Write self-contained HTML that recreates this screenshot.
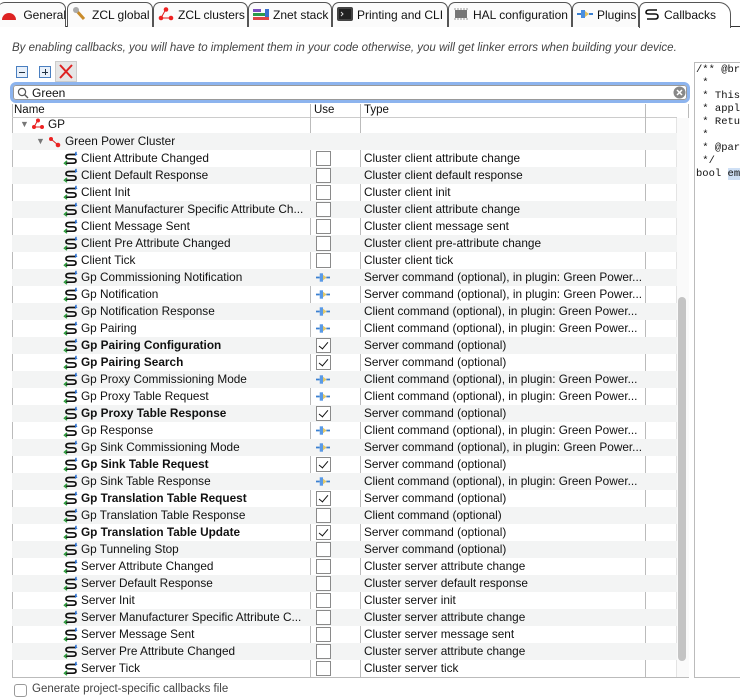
<!DOCTYPE html>
<html><head><meta charset="utf-8"><style>
*{box-sizing:border-box;margin:0;padding:0}
body{width:740px;height:697px;background:#fff;font-family:"Liberation Sans",sans-serif;font-size:11.8px;color:#111;position:relative;overflow:hidden}
.abs{position:absolute}
.tabs{position:absolute;left:0;top:0;width:740px;height:27px;background:#fff;border-bottom:1px solid #333}
.tab{position:absolute;top:2px;height:25px;border:1px solid #555;border-bottom:none;border-radius:7px 7px 0 0;background:#fbfbfb;font-size:12px;line-height:24px;padding-left:4px;white-space:nowrap}
.tab.act{background:#fff;height:26px}
.ic{display:inline-block;width:16px;height:14px;vertical-align:-2px;margin-right:4px}
.row{position:absolute;left:12px;width:665px;height:17px;line-height:17px;white-space:nowrap}
.row.s{background:#f3f4f4}
.nm{position:absolute;left:69px}
.ty{position:absolute;left:352px;width:280px;overflow:hidden}
.cb{position:absolute;left:304px;top:1px;width:15px;height:15px;border:1px solid #8a8a8a;background:#fff}
.cb.c::after{content:"";position:absolute;left:4px;top:1px;width:4px;height:8px;border:solid #111;border-width:0 1.5px 1.5px 0;transform:rotate(40deg)}
.pl{position:absolute;left:304px;top:3px}
.si{position:absolute;left:51px;top:1px}
b{font-weight:bold}
.code{position:absolute;left:694px;top:62px;width:50px;height:616px;border:1px solid #bbb;border-right:none;font-family:"Liberation Mono",monospace;font-size:10.5px;line-height:13px;white-space:pre;padding:1px 0 0 1px;overflow:hidden}
</style></head><body>
<div class="tabs">
 <div class="tab" style="left:-2px;width:68px;padding-left:4px;border-left:none"><span class="ic" style="width:14px;height:7px;background:#d22;border-radius:7px 7px 0 0;vertical-align:-1px"></span> General</div>
 <div class="tab" style="left:67px;width:86px"><svg class="ic" viewBox="0 0 16 14"><path d="M3 2 L12 12" stroke="#c98b2a" stroke-width="3"/><circle cx="4" cy="3" r="3" fill="#aaa"/></svg>ZCL global</div>
 <div class="tab" style="left:153px;width:95px"><svg class="ic" viewBox="0 0 16 14"><path d="M8 2 L3 11 L13 11" stroke="#d22" fill="none"/><circle cx="8" cy="2.5" r="2.3" fill="#e22"/><circle cx="3" cy="11" r="2.3" fill="#e22"/><circle cx="13" cy="11" r="2.3" fill="#e22"/></svg>ZCL clusters</div>
 <div class="tab" style="left:248px;width:84px"><svg class="ic" viewBox="0 0 16 14"><rect x="0" y="2" width="8" height="3" fill="#7a4fc0"/><rect x="0" y="6" width="12" height="3" fill="#2a9a4a"/><rect x="0" y="10" width="16" height="3" fill="#d44"/><rect x="12" y="2" width="4" height="8" fill="#3a6fd0"/></svg>Znet stack</div>
 <div class="tab" style="left:332px;width:116px"><svg class="ic" viewBox="0 0 16 14"><rect x="0" y="0" width="16" height="14" rx="2" fill="#444"/><rect x="2" y="2" width="12" height="10" fill="#222"/><path d="M4 5 L6 7 L4 9" stroke="#ddd" fill="none"/></svg>Printing and CLI</div>
 <div class="tab" style="left:448px;width:124px"><svg class="ic" viewBox="0 0 16 14"><rect x="2" y="3" width="12" height="8" fill="#777"/><path d="M2 3 V1 M5 3V1 M8 3V1 M11 3V1 M14 3V1 M2 11V13 M5 11V13 M8 11V13 M11 11V13 M14 11V13" stroke="#999"/></svg>HAL configuration</div>
 <div class="tab" style="left:572px;width:67px"><svg class="ic" viewBox="0 0 16 14"><path d="M0 7H4M12 7H16" stroke="#3a7fd0" stroke-width="2"/><rect x="4" y="3" width="4" height="8" fill="#4a8fe0"/><path d="M8 4 L12 7 L8 10Z" fill="#e0c060"/></svg>Plugins</div>
 <div class="tab act" style="left:639px;width:92px;border-radius:7px 12px 0 0"><svg class="ic" viewBox="0 0 16 14"><path d="M13 3 H5 Q2 3 2 5.5 Q2 7 5 7 H11 Q14 7 14 9.5 Q14 12 11 12 H3" stroke="#111" stroke-width="1.6" fill="none"/></svg>Callbacks</div>
</div>
<div class="abs" style="left:12px;top:42px;font-style:italic;font-size:11.5px;color:#444">By enabling callbacks, you will have to implement them in your code otherwise, you will get linker errors when building your device.</div>
<div class="abs" style="left:16px;top:66px;width:12px;height:12px;border:1px solid #4a7fc0;background:#e8f0fa"><div style="position:absolute;left:2px;top:5px;width:6px;height:1px;background:#234"></div></div>
<div class="abs" style="left:39px;top:66px;width:12px;height:12px;border:1px solid #4a7fc0;background:#e8f0fa"><div style="position:absolute;left:2px;top:5px;width:6px;height:1px;background:#234"></div><div style="position:absolute;left:5px;top:2px;width:1px;height:6px;background:#234"></div></div>
<div class="abs" style="left:55px;top:61px;width:22px;height:21px;background:#e6e6e6;border:1px solid #ccc"><svg width="20" height="19" viewBox="0 0 20 19"><path d="M4 3 L16 16 M16 3 L4 16" stroke="#d22" stroke-width="2"/></svg></div>
<div class="abs" style="left:10px;top:82px;width:680px;height:21px;border:3px solid #8db4ee;border-radius:6px;background:#fff"></div>
<div class="abs" style="left:13px;top:85px;width:674px;height:15px;border:1px solid #999;border-radius:3px;background:#fff;font-size:12px;line-height:14px;padding-left:18px">Green</div>
<svg class="abs" style="left:17px;top:87px" width="12" height="12" viewBox="0 0 12 12"><circle cx="5" cy="5" r="3.6" stroke="#555" fill="none" stroke-width="1.2"/><path d="M7.5 7.5L11 11" stroke="#555" stroke-width="1.3"/></svg>
<svg class="abs" style="left:673px;top:86px" width="13" height="13"><circle cx="6.5" cy="6.5" r="6" fill="#888"/><path d="M4 4L9 9M9 4L4 9" stroke="#fff" stroke-width="1.5"/></svg>
<div class="abs" style="left:12px;top:104px;width:677px;height:574px;border:1px solid #bbb;border-top:none"></div>
<div class="abs" style="left:12px;top:104px;width:665px;height:14px;border-bottom:1px solid #ccc;font-size:11.5px;line-height:13px"><span style="position:absolute;left:2px">Name</span><span style="position:absolute;left:302px">Use</span><span style="position:absolute;left:352px">Type</span></div>
<div class="abs" style="left:310px;top:104px;width:1px;height:573px;background:#bbb"></div>
<div class="abs" style="left:360px;top:104px;width:1px;height:573px;background:#bbb"></div>
<div class="abs" style="left:645px;top:104px;width:1px;height:573px;background:#bbb"></div>
<div class="abs" style="left:676px;top:118px;width:13px;height:559px;background:#fafafa;border-left:1px solid #e4e4e4"></div>
<div class="abs" style="left:678px;top:297px;width:8px;height:364px;background:#c4c4c4;border-radius:4px"></div>
<div id="rows"></div>
<div class="row" style="top:116px"><span class="abs" style="left:8px;top:0;font-size:9px;color:#777">▼</span><svg class="abs" style="left:19px;top:2px" width="14" height="12"><path d="M7 2L3 9L11 9" stroke="#d22" fill="none"/><circle cx="7" cy="2.5" r="2" fill="#e22"/><circle cx="3" cy="9" r="2" fill="#e22"/><circle cx="11" cy="9" r="2" fill="#e22"/></svg><span class="abs" style="left:36px">GP</span></div>
<div class="row s" style="top:133px"><span class="abs" style="left:24px;font-size:9px;color:#777">▼</span><svg class="abs" style="left:36px;top:3px" width="14" height="12"><circle cx="3" cy="3" r="2" fill="#e22"/><circle cx="10" cy="9" r="2.3" fill="#e22"/><path d="M3 3L10 9" stroke="#d22"/></svg><span class="abs" style="left:53px">Green Power Cluster</span></div>
<script>
var R=[
["Client Attribute Changed","c","Cluster client attribute change"],
["Client Default Response","c","Cluster client default response"],
["Client Init","c","Cluster client init"],
["Client Manufacturer Specific Attribute Ch...","c","Cluster client attribute change"],
["Client Message Sent","c","Cluster client message sent"],
["Client Pre Attribute Changed","c","Cluster client pre-attribute change"],
["Client Tick","c","Cluster client tick"],
["Gp Commissioning Notification","p","Server command (optional), in plugin: Green Power..."],
["Gp Notification","p","Server command (optional), in plugin: Green Power..."],
["Gp Notification Response","p","Client command (optional), in plugin: Green Power..."],
["Gp Pairing","p","Client command (optional), in plugin: Green Power..."],
["*Gp Pairing Configuration","k","Server command (optional)"],
["*Gp Pairing Search","k","Server command (optional)"],
["Gp Proxy Commissioning Mode","p","Client command (optional), in plugin: Green Power..."],
["Gp Proxy Table Request","p","Client command (optional), in plugin: Green Power..."],
["*Gp Proxy Table Response","k","Server command (optional)"],
["Gp Response","p","Client command (optional), in plugin: Green Power..."],
["Gp Sink Commissioning Mode","p","Server command (optional), in plugin: Green Power..."],
["*Gp Sink Table Request","k","Server command (optional)"],
["Gp Sink Table Response","p","Client command (optional), in plugin: Green Power..."],
["*Gp Translation Table Request","k","Server command (optional)"],
["Gp Translation Table Response","c","Client command (optional)"],
["*Gp Translation Table Update","k","Server command (optional)"],
["Gp Tunneling Stop","c","Server command (optional)"],
["Server Attribute Changed","c","Cluster server attribute change"],
["Server Default Response","c","Cluster server default response"],
["Server Init","c","Cluster server init"],
["Server Manufacturer Specific Attribute C...","c","Cluster server attribute change"],
["Server Message Sent","c","Cluster server message sent"],
["Server Pre Attribute Changed","c","Cluster server attribute change"],
["Server Tick","c","Cluster server tick"]];
var S='<svg class="si" width="16" height="15" viewBox="0 0 16 15"><path d="M13 3.5H6Q3 3.5 3 5.8Q3 7.8 6 7.8H10Q13 7.8 13 10Q13 12.2 10 12.2H3" stroke="#111" stroke-width="1.7" fill="none"/><path d="M12 1.5L14.5 3.5L12 5" fill="#2a6fd0"/><path d="M13 0.8V3" stroke="#2a6fd0" stroke-width="1.4"/><path d="M4 10L1.5 12.2L4 14.2" stroke="#2a9a3a" stroke-width="1.5" fill="none"/></svg>';
var P='<svg class="pl" width="14" height="11" viewBox="0 0 15 11"><path d="M0 5.5H4M11 5.5H15" stroke="#3a7fd0" stroke-width="2"/><rect x="4" y="1" width="3.5" height="9" fill="#5a9ae6"/><path d="M7.5 2.5L11.5 5.5L7.5 8.5Z" fill="#e2c86a"/></svg>';
var h='';
R.forEach(function(r,i){var n=r[0],b=n[0]=='*';if(b)n=n.slice(1);
var u=r[1]=='p'?P:'<div class="cb'+(r[1]=='k'?' c':'')+'"></div>';
h+='<div class="row'+(i%2?' s':'')+'" style="top:'+(150+i*17)+'px">'+S+'<span class="nm">'+(b?'<b>'+n+'</b>':n)+'</span>'+u+'<span class="ty">'+r[2]+'</span></div>';});
document.getElementById('rows').innerHTML=h;
</script>
<div class="code">/** @brief
 *
 * This
 * appl
 * Retu
 *
 * @par
 */
bool <span style="background:#cfe0f5">em</span></div>
<div class="abs" style="left:14px;top:684px;width:13px;height:13px;border:1px solid #999;border-radius:3px;background:#fff"></div>
<div class="abs" style="left:32px;top:683px;font-size:11.5px;color:#444">Generate project-specific callbacks file</div>
</body></html>
